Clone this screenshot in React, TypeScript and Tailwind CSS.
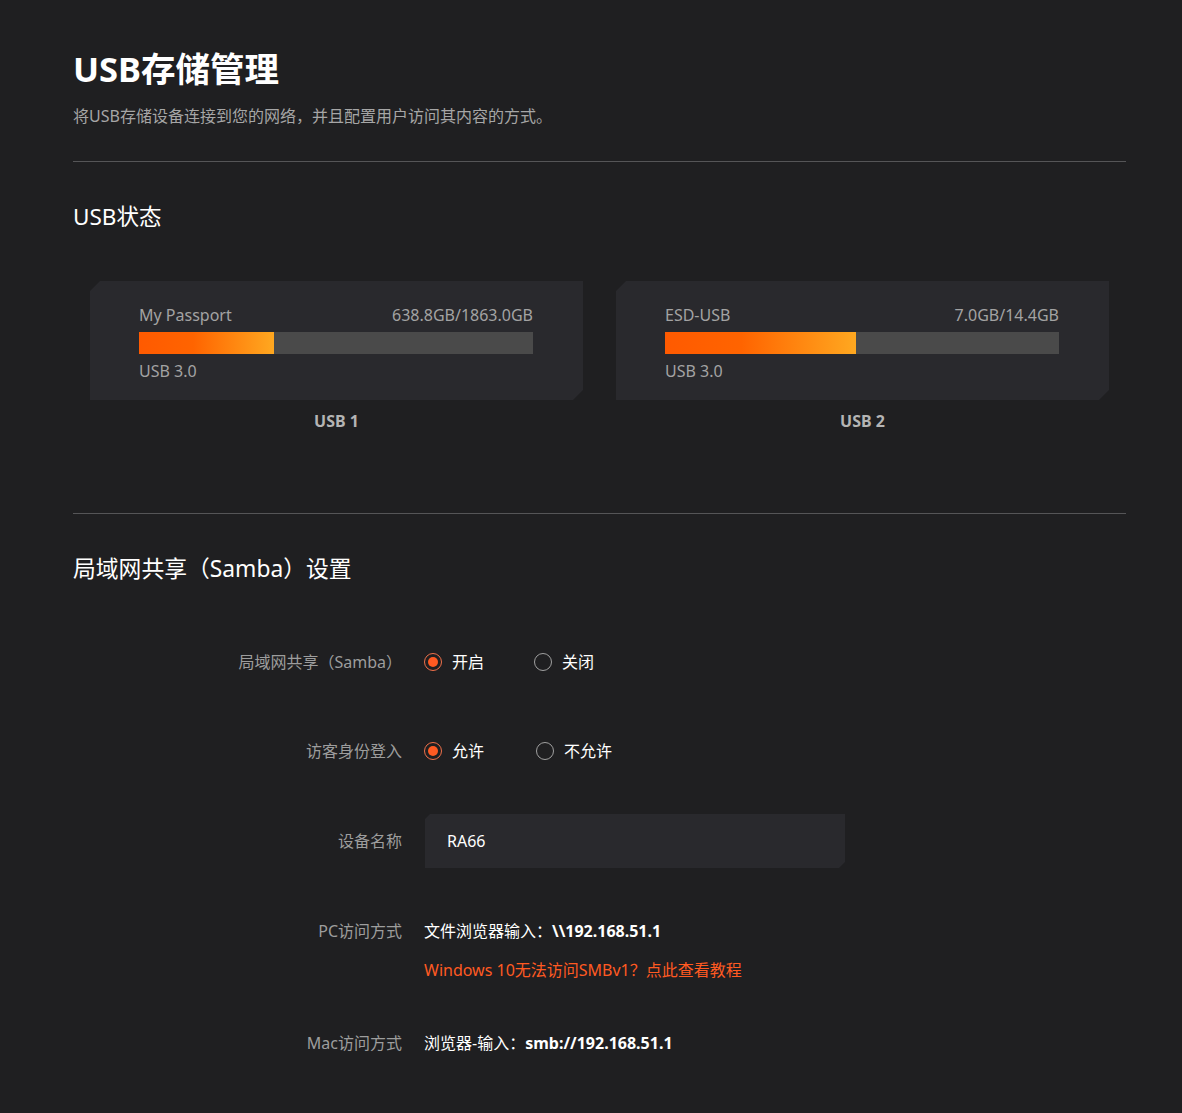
import React from "react";

const font = { fontFamily: '"Noto Sans", "Noto Sans CJK SC", sans-serif' };

function UsbCard({ name, usage, pct, label }: { name: string; usage: string; pct: number; label: string }) {
  return (
    <div className="flex flex-col items-center">
      <div className="w-full bg-[#29292d] pt-[23px] pb-[18px] pl-[49px] pr-[50px] [clip-path:polygon(10px_0,100%_0,100%_calc(100%-10px),calc(100%-10px)_100%,0_100%,0_10px)]">
        <div className="flex justify-between text-[16px] leading-[22px] text-[#a3a3a3]">
          <span>{name}</span>
          <span>{usage}</span>
        </div>
        <div className="mt-[6px] h-[22px] w-full bg-[#4a4a4a]">
          <div
            className="h-full bg-[linear-gradient(90deg,#ff5a00_0%,#ff6400_40%,#ffa820_100%)]"
            style={{ width: `${pct}%` }}
          />
        </div>
        <div className="mt-[6px] text-[16px] leading-[22px] text-[#a3a3a3]">USB 3.0</div>
      </div>
      <div className="mt-[10px] text-[16px] leading-[22px] font-bold text-[#b4b4b4]">{label}</div>
    </div>
  );
}

function Radio({ checked, text }: { checked: boolean; text: string }) {
  return (
    <div className="flex items-center">
      {checked ? (
        <span className="flex h-[18px] w-[18px] items-center justify-center rounded-full border border-[#f0704a]">
          <span className="h-[10px] w-[10px] rounded-full bg-[#ff5a22]" />
        </span>
      ) : (
        <span className="h-[18px] w-[18px] rounded-full border border-[#a0a0a0]" />
      )}
      <span className="ml-[10px] text-[16px] leading-[22px] text-white">{text}</span>
    </div>
  );
}

function Row({ label, children, className = "" }: { label: string; children: React.ReactNode; className?: string }) {
  return (
    <div className={"flex items-center " + className}>
      <div className="w-[329px] shrink-0 text-right text-[16px] leading-[22px] text-[#9d9d9d]">{label}</div>
      <div className="ml-[22px] flex items-center">{children}</div>
    </div>
  );
}

export default function App() {
  return (
    <div className="min-h-[1113px] w-full bg-[#1f1f21]" style={font}>
      <div className="ml-[73px] w-[1053px] pt-[44px]">
        <h1 className="text-[34.5px] leading-[50px] font-bold text-white">USB存储管理</h1>
        <p className="mt-[11px] text-[16px] leading-[22px] text-[#a6a6a6]">
          将USB存储设备连接到您的网络，并且配置用户访问其内容的方式。
        </p>
        <div className="mt-[34px] h-px bg-[#555557]" />
        <h2 className="mt-[40px] text-[22.5px] leading-[30px] text-white">USB状态</h2>
        <div className="mt-[49px] grid grid-cols-2 gap-[33px] px-[17px]">
          <UsbCard name="My Passport" usage="638.8GB/1863.0GB" pct={34.3} label="USB 1" />
          <UsbCard name="ESD-USB" usage="7.0GB/14.4GB" pct={48.6} label="USB 2" />
        </div>
        <div className="mt-[81px] h-px bg-[#555557]" />
        <h2 className="mt-[40px] text-[22.8px] leading-[30px] text-white">局域网共享（Samba）设置</h2>

        <Row label="局域网共享（Samba）" className="mt-[67px]">
          <div className="w-[110px]">
            <Radio checked text="开启" />
          </div>
          <Radio checked={false} text="关闭" />
        </Row>
        <Row label="访客身份登入" className="mt-[67px]">
          <div className="w-[112px]">
            <Radio checked text="允许" />
          </div>
          <Radio checked={false} text="不允许" />
        </Row>
        <Row label="设备名称" className="mt-[52px]">
          <div className="ml-px flex h-[54px] w-[420px] items-center bg-[#29292d] pl-[22px] text-[16px] text-white [clip-path:polygon(5px_0,100%_0,100%_calc(100%-6px),calc(100%-6px)_100%,0_100%,0_5px)]">
            RA66
          </div>
        </Row>
        <Row label="PC访问方式" className="mt-[52px]">
          <span className="text-[16px] leading-[22px] text-white">
            文件浏览器输入：<span className="font-bold">\\192.168.51.1</span>
          </span>
        </Row>
        <div className="ml-[351px] mt-[17px] text-[16px] leading-[22px] text-[#ff5a22]">
          Windows 10无法访问SMBv1？点此查看教程
        </div>
        <Row label="Mac访问方式" className="mt-[51px]">
          <span className="text-[16px] leading-[22px] text-white">
            浏览器-输入：<span className="font-bold">smb://192.168.51.1</span>
          </span>
        </Row>
      </div>
    </div>
  );
}
